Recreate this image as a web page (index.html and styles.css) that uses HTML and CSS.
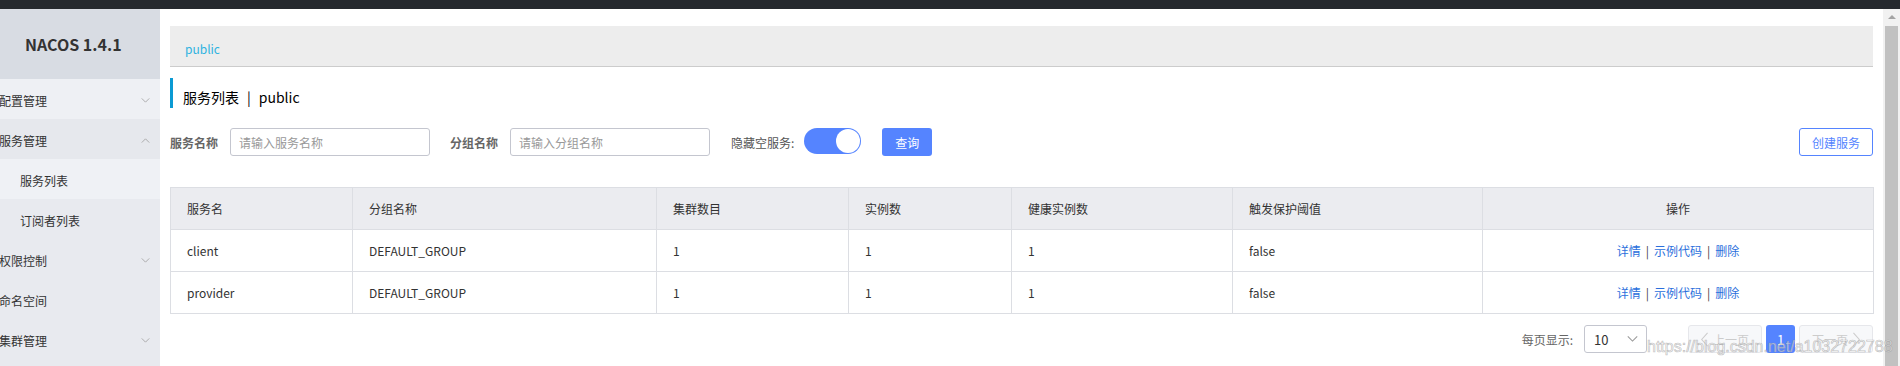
FILE: index.html
```html
<!DOCTYPE html>
<html lang="zh-CN">
<head>
<meta charset="utf-8">
<title>Nacos</title>
<link rel="stylesheet" href="styles.css">
</head>
<body>
<div class="topbar"></div>
<div class="layout">
  <aside class="sidebar">
    <div class="brand">NACOS 1.4.1</div>
    <ul class="menu">
      <li class="item item-light"><span>配置管理</span><svg class="chev" viewBox="0 0 10 6" width="9" height="5"><polyline points="0.5,0.5 5,5 9.5,0.5"/></svg></li>
      <li class="item item-open"><span>服务管理</span><svg class="chev" viewBox="0 0 10 6" width="9" height="5"><polyline points="0.5,5.5 5,1 9.5,5.5"/></svg></li>
      <li class="sub sub-active">服务列表</li>
      <li class="sub">订阅者列表</li>
      <li class="item"><span>权限控制</span><svg class="chev" viewBox="0 0 10 6" width="9" height="5"><polyline points="0.5,0.5 5,5 9.5,0.5"/></svg></li>
      <li class="item"><span>命名空间</span></li>
      <li class="item"><span>集群管理</span><svg class="chev" viewBox="0 0 10 6" width="9" height="5"><polyline points="0.5,0.5 5,5 9.5,0.5"/></svg></li>
    </ul>
  </aside>
  <main class="main">
    <div class="crumb"><span class="crumb-link">public</span></div>
    <div class="title">服务列表<span class="title-sep">|</span>public</div>
    <div class="filters">
      <label class="flabel">服务名称</label>
      <input class="finput" type="text" placeholder="请输入服务名称">
      <label class="flabel flabel-gap">分组名称</label>
      <input class="finput" type="text" placeholder="请输入分组名称">
      <label class="flabel flabel-gap2">隐藏空服务:</label>
      <span class="switch"><span class="knob"></span></span>
      <button class="btn-primary">查询</button>
      <button class="btn-outline">创建服务</button>
    </div>
    <table class="grid">
      <colgroup>
        <col class="c1"><col class="c2"><col class="c3"><col class="c4"><col class="c5"><col class="c6"><col class="c7">
      </colgroup>
      <thead>
        <tr><th>服务名</th><th>分组名称</th><th>集群数目</th><th>实例数</th><th>健康实例数</th><th>触发保护阈值</th><th class="center">操作</th></tr>
      </thead>
      <tbody>
        <tr><td>client</td><td>DEFAULT_GROUP</td><td>1</td><td>1</td><td>1</td><td>false</td><td class="center ops"><a>详情</a><span class="sep">|</span><a>示例代码</a><span class="sep">|</span><a>删除</a></td></tr>
        <tr><td>provider</td><td>DEFAULT_GROUP</td><td>1</td><td>1</td><td>1</td><td>false</td><td class="center ops"><a>详情</a><span class="sep">|</span><a>示例代码</a><span class="sep">|</span><a>删除</a></td></tr>
      </tbody>
    </table>
    <div class="pager">
      <span class="pager-label">每页显示:</span>
      <span class="select"><span>10</span><svg class="sel-chev" viewBox="0 0 12 7" width="11" height="6"><polyline points="0.5,0.5 6,6 11.5,0.5"/></svg></span>
      <span class="pbtn pbtn-prev"><svg class="pchev" viewBox="0 0 8 16" width="7" height="15"><polyline points="7.5,0.5 0.8,8 7.5,15.5"/></svg><span>上一页</span></span>
      <span class="pnum">1</span>
      <span class="pbtn pbtn-next"><span>下一页</span><svg class="pchev" viewBox="0 0 8 16" width="7" height="15"><polyline points="0.5,0.5 7.2,8 0.5,15.5"/></svg></span>
      <span class="watermark">https://blog.csdn.net/a1032722788</span>
    </div>
  </main>
  <div class="scrollbar"><div class="sb-arrow"></div><div class="sb-thumb"></div></div>
</div>
</body>
</html>
```

FILE: styles.css
```css
* { box-sizing: border-box; }
html, body { margin: 0; padding: 0; }
body {
  width: 1900px;
  height: 366px;
  overflow: hidden;
  background: #fff;
  font-family: "Noto Sans CJK SC", "Liberation Sans", sans-serif;
  font-size: 12px;
  color: #333;
}
.topbar { height: 9px; background: #25292e; }
.layout { display: flex; height: 357px; }

/* sidebar */
.sidebar { width: 160px; flex: none; background: #e8eaef; }
.brand {
  height: 70px;
  background: #d8dce3;
  padding-left: 25px;
  line-height: 70px;
  font-size: 16px;
  font-weight: bold;
  color: #333;
}
.menu { list-style: none; margin: 0; padding: 0; }
.item, .sub {
  height: 40px;
  display: flex;
  align-items: center;
  justify-content: space-between;
  padding: 2px 10px 0 0;
  font-size: 12px;
  color: #333;
}
.item span { margin-left: -1px; }
.item-light { background: #eef0f4; }
.item-open { background: #e6e8ed; }
.sub { padding-left: 20px; }
.sub-active { background: #eff1f5; }
.chev { fill: none; stroke: #a0a0a0; stroke-width: 1; }

/* main */
.main { flex: 1; min-width: 0; padding: 17px 10px 0 10px; }
.crumb {
  height: 41px;
  background: #ededed;
  border-bottom: 1px solid #cccccc;
  padding-left: 15px;
  line-height: 46px;
}
.crumb-link { color: #2fb3e0; font-size: 12px; }
.title {
  margin-top: 11px;
  height: 30px;
  border-left: 3px solid #0b9ad3;
  padding-left: 10px;
  font-size: 14px;
  line-height: 38px;
  color: #000;
}
.title-sep { margin: 0 8px; }

.filters { margin-top: 20px; height: 28px; display: flex; align-items: center; }
.flabel { font-weight: bold; color: #666; font-size: 12px; margin-right: 12px; white-space: nowrap; }
.flabel-gap { margin-left: 20px; }
.flabel-gap2 { margin-left: 21px; font-weight: normal; color: #555; margin-right: 10px; }
.finput {
  width: 200px;
  height: 28px;
  border: 1px solid #c4c6cf;
  border-radius: 3px;
  padding: 0 8px;
  font-family: inherit;
  font-size: 12px;
  color: #333;
  outline: none;
}
.finput::placeholder { color: #999; }
.switch {
  position: relative;
  width: 57px;
  height: 26px;
  border-radius: 13px;
  background: #5584ff;
  display: inline-block;
  align-self: flex-start;
}
.knob {
  position: absolute;
  right: 1px;
  top: 1px;
  width: 24px;
  height: 24px;
  border-radius: 50%;
  background: #fff;
}
.btn-primary {
  margin-left: 21px;
  width: 50px;
  height: 28px;
  border: none;
  border-radius: 3px;
  background: #5584ff;
  color: #fff;
  font-family: inherit;
  font-size: 12px;
  padding: 0;
}
.btn-outline {
  margin-left: auto;
  width: 74px;
  height: 28px;
  border: 1px solid #5584ff;
  border-radius: 3px;
  background: #fff;
  color: #5584ff;
  font-family: inherit;
  font-size: 12px;
  padding: 0;
}

/* table */
.grid {
  margin-top: 31px;
  width: 100%;
  border-collapse: collapse;
  table-layout: fixed;
  border: 1px solid #dcdee3;
}
.c1 { width: 182px; } .c2 { width: 304px; } .c3 { width: 192px; } .c4 { width: 163px; }
.c5 { width: 221px; } .c6 { width: 250px; } .c7 { width: 391px; }
.grid th, .grid td {
  height: 42px;
  padding: 0 16px;
  border: 1px solid #dcdee3;
  text-align: left;
  font-weight: normal;
  font-size: 12px;
  color: #333;
  white-space: nowrap;
}
.grid th { background: #ebecf0; }
.grid .center { text-align: center; }
.ops a { color: #2b6fdc; }
.ops .sep { color: #444; margin: 0 5px; }

/* pager */
.pager {
  position: relative;
  margin-top: 11px;
  height: 28px;
  display: flex;
  justify-content: flex-end;
  align-items: center;
}
.pager-label { color: #666; margin-right: 11px; }
.select {
  width: 63px;
  height: 28px;
  border: 1px solid #c4c6cf;
  border-radius: 3px;
  display: flex;
  align-items: center;
  justify-content: space-between;
  padding: 0 8px 0 9px;
  font-size: 13px;
  color: #333;
  margin-right: 41px;
}
.sel-chev { fill: none; stroke: #999; stroke-width: 1.2; }
.pbtn {
  width: 74px;
  height: 28px;
  border: 1px solid #e6e7eb;
  border-radius: 3px;
  background: #f7f8fa;
  color: #ccc;
  display: flex;
  align-items: center;
  justify-content: center;
  gap: 5px;
  font-size: 12px;
}
.pchev { fill: none; stroke: #ccc; stroke-width: 1.2; }
.pnum {
  width: 29px;
  height: 28px;
  margin: 0 4px;
  border-radius: 3px;
  background: #5584ff;
  color: #fff;
  display: flex;
  align-items: center;
  justify-content: center;
  font-size: 13px;
}
.watermark {
  position: absolute;
  left: 1477px;
  top: 13px;
  font-family: "Liberation Sans", sans-serif;
  font-size: 16px;
  color: rgba(255, 255, 255, 0.55);
  -webkit-text-stroke: 0.7px rgba(140, 140, 140, 0.55);
  white-space: nowrap;
}

/* scrollbar */
.scrollbar { width: 17px; flex: none; background: #f1f1f1; display: flex; flex-direction: column; align-items: center; }
.sb-arrow {
  height: 17px;
  width: 100%;
  position: relative;
}
.sb-arrow::after {
  content: "";
  position: absolute;
  left: 5px;
  top: 6px;
  border-left: 4px solid transparent;
  border-right: 4px solid transparent;
  border-bottom: 4px solid #a3a3a3;
}
.sb-thumb { width: 13px; flex: 1; background: #c1c1c1; }
```
